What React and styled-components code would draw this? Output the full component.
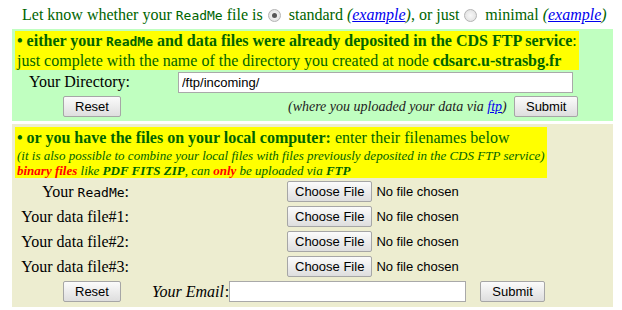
import styled, { createGlobalStyle } from "styled-components";

const GlobalStyle = createGlobalStyle`
    body {
        margin: 0;
        background: #ffffff;
        font-family: "Liberation Serif", "Times New Roman", serif;
        font-size: 16px;
        color: #006400;
    }
`;

const Page = styled.div`
    width: 601px;
    padding: 4px 0 0 12px;
`;

const Intro = styled.p`
    display: flex;
    align-items: center;
    margin: 0;
    height: 22px;
    padding-left: 10px;
    white-space: nowrap;
`;

const Mono = styled.span`
    font-family: "DejaVu Sans Mono", "Liberation Mono", monospace;
    font-size: 13px;
    margin: 0 ${(p) => (p.$tight ? "0" : "4px")};
`;

const Radio = styled.span`
    display: inline-block;
    box-sizing: border-box;
    width: 13px;
    height: 13px;
    margin: 0 8px 0 5px;
    border-radius: 50%;
    border: 1px solid #b4b4b4;
    background: radial-gradient(circle, #f8f8f8 0%, #dcdcdc 100%);
    position: relative;

    &::after {
        content: "";
        display: ${(p) => (p.$checked ? "block" : "none")};
        position: absolute;
        left: 3px;
        top: 3px;
        width: 5px;
        height: 5px;
        border-radius: 50%;
        background: #555;
    }
`;

const Example = styled.a`
    font-style: italic;
    color: #006400;
    margin-left: 4px;

    span {
        color: #0000ee;
        text-decoration: underline;
    }
`;

const Panel = styled.section`
    margin-top: 3px;
    padding: ${(p) => p.$padTop}px 3px ${(p) => p.$padBottom}px;
    background: ${(p) => p.$bg};
`;

const Note = styled.div`
    display: inline-block;
    background: #ffff00;
    line-height: 19px;
    padding: 0 2px;
    white-space: nowrap;
`;

const Lead = styled.div`
    line-height: 21px;
`;

const Small = styled.div`
    font-size: 13px;
    font-style: italic;
    line-height: 15px;
`;

const Red = styled.b`
    color: #ff0000;
`;

const DirRow = styled.div`
    display: flex;
    align-items: center;
    height: 24px;
    color: #000;
`;

const DirLabel = styled.span`
    width: 149px;
    padding-left: 14px;
    font-size: 16px;
`;

const TextBox = styled.input`
    box-sizing: border-box;
    width: ${(p) => p.$w}px;
    height: 21px;
    border: 1px solid #a9a9a9;
    background: #fff;
    padding: 1px 3px;
    font-family: "Liberation Sans", Arial, sans-serif;
    font-size: 13px;
    color: #000;
    outline: none;
`;

const ButtonRow = styled.div`
    display: flex;
    align-items: center;
    height: 25px;
    padding-left: 48px;
`;

const Btn = styled.button`
    box-sizing: border-box;
    height: 21px;
    padding: 0 ${(p) => p.$pad || 11}px;
    border: 1px solid #a6a6a6;
    border-radius: 2px;
    background: linear-gradient(#fbfbfb, #dedede);
    font-family: "Liberation Sans", Arial, sans-serif;
    font-size: 13px;
    color: #000;
`;

const Hint = styled.span`
    margin-left: 167px;
    width: 226px;
    font-style: italic;
    font-size: 14px;
    white-space: nowrap;
    color: #222;

    a {
        color: #0000ee;
    }
`;

const FileRow = styled.div`
    display: grid;
    grid-template-columns: 114px 1fr;
    column-gap: 158px;
    align-items: center;
    height: 25px;
    color: #000;
`;

const FileLabel = styled.span`
    text-align: right;
    font-size: 16px;
    white-space: nowrap;
`;

const FilePick = styled.div`
    display: flex;
    align-items: center;
    gap: 4px;
    font-family: "Liberation Sans", Arial, sans-serif;
    font-size: 13px;
`;

const EmailRow = styled.div`
    display: flex;
    align-items: center;
    height: 25px;
    padding-left: 48px;
    color: #000;
`;

const EmailLabel = styled.span`
    margin: 0 1px 0 31px;
    font-style: italic;
`;

const SubmitGap = styled.span`
    width: 14px;
`;

function FileField({ label }) {
    return (
        <FileRow>
            <FileLabel>{label}</FileLabel>
            <FilePick>
                <Btn type="button" $pad={7}>Choose File</Btn>
                <span>No file chosen</span>
            </FilePick>
        </FileRow>
    );
}

export default function App() {
    return (
        <>
            <GlobalStyle />
            <Page>
                <Intro>
                    Let know whether your<Mono>ReadMe</Mono>file is
                    <Radio $checked />
                    standard
                    <Example>
                        (<span>example</span>)
                    </Example>
                    , or just
                    <Radio />
                    minimal
                    <Example>
                        (<span>example</span>)
                    </Example>
                </Intro>

                <Panel $bg="#c0ffc0" $padTop={2} $padBottom={2}>
                    <Note>
                        <b>
                            • either your <Mono $tight>ReadMe</Mono> and data files were already
                            deposited in the CDS FTP service
                        </b>
                        :
                        <br />
                        just complete with the name of the directory you created at node{" "}
                        <b>cdsarc.u-strasbg.fr</b>
                    </Note>
                    <DirRow>
                        <DirLabel>Your Directory:</DirLabel>
                        <TextBox $w={395} defaultValue="/ftp/incoming/" />
                    </DirRow>
                    <ButtonRow>
                        <Btn type="button">Reset</Btn>
                        <Hint>
                            (where you uploaded your data via <a href="#ftp">ftp</a>)
                        </Hint>
                        <Btn type="button" $pad={11}>Submit</Btn>
                    </ButtonRow>
                </Panel>

                <Panel $bg="#ededd0" $padTop={3} $padBottom={3}>
                    <Note>
                        <Lead>
                            <b>• or you have the files on your local computer:</b> enter their
                            filenames below
                        </Lead>
                        <Small>
                            (it is also possible to combine your local files with files previously
                            deposited in the CDS FTP service)
                        </Small>
                        <Small>
                            <Red>binary files</Red> like <b>PDF FITS ZIP</b>, can <Red>only</Red> be
                            uploaded via <b>FTP</b>
                        </Small>
                    </Note>
                    <FileField
                        label={
                            <>
                                Your <Mono $tight>ReadMe</Mono>:
                            </>
                        }
                    />
                    <FileField label="Your data file#1:" />
                    <FileField label="Your data file#2:" />
                    <FileField label="Your data file#3:" />
                    <EmailRow>
                        <Btn type="button">Reset</Btn>
                        <EmailLabel>Your Email</EmailLabel>:
                        <TextBox $w={237} />
                        <SubmitGap />
                        <Btn type="button" $pad={11}>Submit</Btn>
                    </EmailRow>
                </Panel>
            </Page>
        </>
    );
}
